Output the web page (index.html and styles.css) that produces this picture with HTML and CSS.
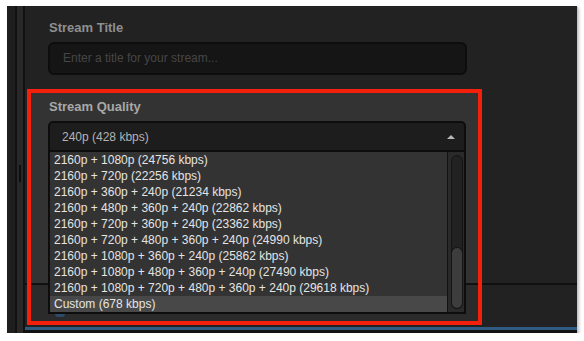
FILE: index.html
```html
<!DOCTYPE html>
<html lang="en">
<head>
    <meta charset="UTF-8">
    <meta name="viewport" content="width=device-width, initial-scale=1.0">
    <title>Stream Settings</title>
    <link rel="stylesheet" href="styles.css">
</head>
<body>
    <div class="shot">
        <div class="rail"><span class="notch"></span></div>

        <div class="main">
            <!-- Titulo -->
            <div class="field">
                <div class="label">Stream Title</div>
                <div class="input">Enter a title for your stream...</div>
            </div>

            <!-- Calidad -->
            <div class="quality">
                <div class="label">Stream Quality</div>
                <div class="select">
                    <div class="select-head">
                        <span>240p (428 kbps)</span>
                        <span class="caret"></span>
                    </div>
                    <div class="select-list">
                        <ul class="options">
                            <li>2160p + 1080p (24756 kbps)</li>
                            <li>2160p + 720p (22256 kbps)</li>
                            <li>2160p + 360p + 240p (21234 kbps)</li>
                            <li>2160p + 480p + 360p + 240p (22862 kbps)</li>
                            <li>2160p + 720p + 360p + 240p (23362 kbps)</li>
                            <li>2160p + 720p + 480p + 360p + 240p (24990 kbps)</li>
                            <li>2160p + 1080p + 360p + 240p (25862 kbps)</li>
                            <li>2160p + 1080p + 480p + 360p + 240p (27490 kbps)</li>
                            <li>2160p + 1080p + 720p + 480p + 360p + 240p (29618 kbps)</li>
                            <li class="active">Custom (678 kbps)</li>
                        </ul>
                        <div class="scroll">
                            <div class="track"><div class="thumb"></div></div>
                        </div>
                    </div>
                </div>
                <div class="peek"></div>
            </div>

            <div class="bottom-bar"></div>
        </div>
    </div>
</body>
</html>
```

FILE: styles.css
```css
:root {
    --fondo: #222222;
    --panel: #333333;
    --negro: #0d0d0d;
    --rojo: #f5200c;
    --azul: #2f5b82;
}

body {
    margin: 0;
    background: #ffffff;
    font-family: 'Liberation Sans', Arial, sans-serif;
}

.shot {
    margin: 6px 0 0 7px;
    width: 570px;
    height: 327px;
    background: var(--fondo);
    display: flex;
    box-shadow: 1px 1px 0 #c4c4c4, 2px 2px 3px rgba(0, 0, 0, 0.25);
}

.rail {
    width: 18px;
    flex: none;
    position: relative;
    background: linear-gradient(to right,
        #1e1e1e 0, #1e1e1e 8px,
        #121212 8px, #121212 10px,
        #282828 10px, #282828 16px,
        #111111 16px, #111111 18px);
}

.notch {
    position: absolute;
    left: 12px;
    top: 159px;
    width: 2px;
    height: 17px;
    background: #0e0e0e;
}

.main {
    flex: 1;
    display: flex;
    flex-direction: column;
    padding-top: 14px;
    background: linear-gradient(to bottom,
        transparent 0, transparent 277px,
        #101010 277px, #101010 279px,
        transparent 279px);
}

.label {
    font-size: 13px;
    font-weight: bold;
    line-height: 16px;
    color: #8f8f8f;
    padding-left: 1px;
}

.field {
    padding-left: 23px;
}

.input {
    margin-top: 6px;
    width: 419px;
    height: 33px;
    box-sizing: border-box;
    border: 2px solid var(--negro);
    border-radius: 6px;
    background: #151515;
    color: #464646;
    font-size: 12px;
    line-height: 29px;
    padding-left: 13px;
}

.quality {
    margin: 14px 0 0 2px;
    width: 455px;
    height: 236px;
    box-sizing: border-box;
    border: 4px solid var(--rojo);
    padding: 6px 0 0 17px;
    background: linear-gradient(to bottom,
        var(--panel) 0, var(--panel) 190px,
        #111111 190px, #111111 192px,
        #2b2b2b 192px);
}

.quality .label {
    color: #a8a8a8;
}

.select {
    margin-top: 6px;
    width: 418px;
}

.select-head {
    height: 31px;
    box-sizing: border-box;
    border: 2px solid var(--negro);
    border-radius: 5px 5px 0 0;
    background: #1d1d1d;
    display: flex;
    align-items: center;
    justify-content: space-between;
    padding: 0 9px 0 12px;
    color: #b3b3b3;
    font-size: 12px;
}

.caret {
    width: 0;
    height: 0;
    border-left: 4px solid transparent;
    border-right: 4px solid transparent;
    border-bottom: 4px solid #b8b8b8;
}

.select-list {
    display: flex;
    border: 2px solid var(--negro);
    border-top: none;
    background: var(--panel);
}

.options {
    flex: 1;
    list-style: none;
    margin: 0;
    padding: 0;
}

.options li {
    height: 16px;
    line-height: 16px;
    padding-left: 4px;
    font-size: 12px;
    color: #e4e4e4;
    white-space: nowrap;
}

.options li.active {
    background: #484848;
}

.scroll {
    width: 17px;
    flex: none;
    border-left: 1px solid #121212;
    background: #2a2a2a;
    padding: 3px 0;
    box-sizing: border-box;
}

.track {
    margin-left: 3px;
    width: 12px;
    height: 100%;
    box-sizing: border-box;
    border: 1px solid #141414;
    border-radius: 6px;
    background: #222222;
    display: flex;
    flex-direction: column;
    justify-content: flex-end;
}

.thumb {
    height: 60px;
    border-radius: 6px;
    background: #3d3d3d;
    box-shadow: 0 0 0 1px #151515;
}

.peek {
    margin-left: 7px;
    width: 10px;
    height: 3px;
    border-radius: 0 0 5px 5px;
    background: #2d4a66;
}

.bottom-bar {
    margin-top: auto;
    height: 6px;
    box-sizing: border-box;
    border-top: 3px solid var(--azul);
    background: #121212;
}
```
